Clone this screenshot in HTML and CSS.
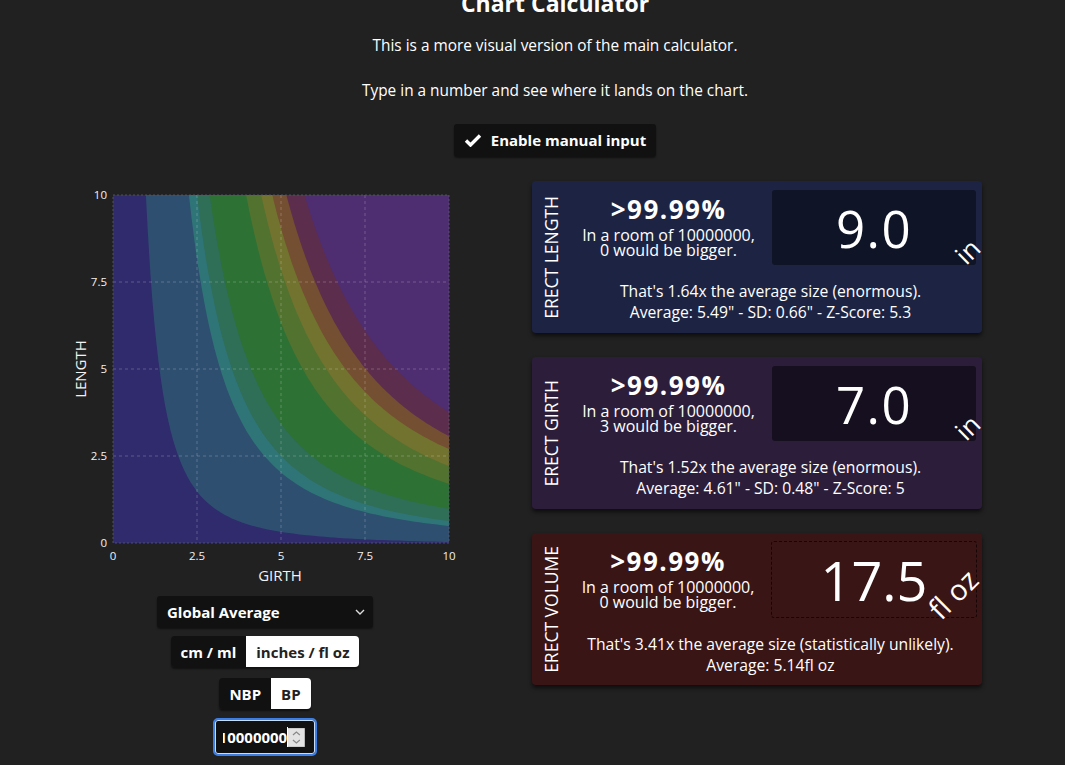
FILE: index.html
```html
<!DOCTYPE html>
<html lang="en">
<head>
    <meta charset="UTF-8">
    <meta name="viewport" content="width=device-width, initial-scale=1.0">
    <title>Chart Calculator</title>
    <link rel="stylesheet" href="styles.css">
</head>
<body>
    <div class="page">
        <header class="intro">
            <h1>Chart Calculator</h1>
            <p>This is a more visual version of the main calculator.</p>
            <p>Type in a number and see where it lands on the chart.</p>
            <button class="manual-btn">
                <svg class="check" width="18" height="14" viewBox="0 0 18 14"><path d="M2 7.5 L6.5 12 L16 2.5"/></svg>
                Enable manual input
            </button>
        </header>

        <div class="calc">
            <div class="chart-col">
                <svg id="chart" class="chart" width="390" height="400" viewBox="0 0 390 400">
                    <defs>
                        <clipPath id="plotClip"><rect x="43" y="8" width="336" height="348"/></clipPath>
                    </defs>
                    <g id="bands" clip-path="url(#plotClip)"></g>
                    <g class="grid">
                        <line x1="127" y1="8" x2="127" y2="356"/>
                        <line x1="211" y1="8" x2="211" y2="356"/>
                        <line x1="295" y1="8" x2="295" y2="356"/>
                        <line x1="43" y1="95" x2="379" y2="95"/>
                        <line x1="43" y1="182" x2="379" y2="182"/>
                        <line x1="43" y1="269" x2="379" y2="269"/>
                    </g>
                    <rect class="frame" x="43" y="8" width="336" height="348"/>
                    <g class="ticks">
                        <text x="37" y="12" text-anchor="end">10</text>
                        <text x="37" y="99" text-anchor="end">7.5</text>
                        <text x="37" y="186" text-anchor="end">5</text>
                        <text x="37" y="273" text-anchor="end">2.5</text>
                        <text x="37" y="360" text-anchor="end">0</text>
                        <text x="43" y="373" text-anchor="middle">0</text>
                        <text x="127" y="373" text-anchor="middle">2.5</text>
                        <text x="211" y="373" text-anchor="middle">5</text>
                        <text x="295" y="373" text-anchor="middle">7.5</text>
                        <text x="379" y="373" text-anchor="middle">10</text>
                    </g>
                    <text class="axis-title" x="210" y="394" text-anchor="middle">GIRTH</text>
                    <text class="axis-title" text-anchor="middle" transform="translate(16 182) rotate(-90)">LENGTH</text>
                </svg>

                <div class="region-select">
                    <span>Global Average</span>
                    <svg width="10" height="6" viewBox="0 0 10 6"><path d="M1 1 L5 5 L9 1"/></svg>
                </div>

                <div class="seg">
                    <span class="off">cm / ml</span>
                    <span class="on">inches / fl oz</span>
                </div>

                <div class="seg">
                    <span class="off">NBP</span>
                    <span class="on">BP</span>
                </div>

                <div class="num-input">
                    <div class="num-text"><span>10000000</span></div>
                    <svg class="spin" width="17" height="19" viewBox="0 0 17 19"><rect width="17" height="19" fill="#e2e2e2"/><path d="M5 7 L8.5 4 L12 7 M5 12 L8.5 15 L12 12"/></svg>
                </div>
            </div>

            <div class="cards">
                <div class="card card-length">
                    <div class="card-label">ERECT LENGTH</div>
                    <div class="card-body">
                        <div class="card-top">
                            <div class="stat">
                                <div class="stat-pct">&gt;99.99%</div>
                                <div class="stat-room">In a room of 10000000,<br>0 would be bigger.</div>
                            </div>
                            <div class="value-box">9.0<span class="unit">in</span></div>
                        </div>
                        <div class="card-bottom">
                            That's 1.64x the average size (enormous).<br>
                            Average: 5.49" - SD: 0.66" - Z-Score: 5.3
                        </div>
                    </div>
                </div>

                <div class="card card-girth">
                    <div class="card-label">ERECT GIRTH</div>
                    <div class="card-body">
                        <div class="card-top">
                            <div class="stat">
                                <div class="stat-pct">&gt;99.99%</div>
                                <div class="stat-room">In a room of 10000000,<br>3 would be bigger.</div>
                            </div>
                            <div class="value-box">7.0<span class="unit">in</span></div>
                        </div>
                        <div class="card-bottom">
                            That's 1.52x the average size (enormous).<br>
                            Average: 4.61" - SD: 0.48" - Z-Score: 5
                        </div>
                    </div>
                </div>

                <div class="card card-volume">
                    <div class="card-label">ERECT VOLUME</div>
                    <div class="card-body">
                        <div class="card-top">
                            <div class="stat">
                                <div class="stat-pct">&gt;99.99%</div>
                                <div class="stat-room">In a room of 10000000,<br>0 would be bigger.</div>
                            </div>
                            <div class="value-box">17.5<span class="unit">fl oz</span></div>
                        </div>
                        <div class="card-bottom">
                            That's 3.41x the average size (statistically unlikely).<br>
                            Average: 5.14fl oz
                        </div>
                    </div>
                </div>
            </div>
        </div>
    </div>

    <script>
        // plot area inside the svg, both axes run 0..10
        const plot = { x: 43, y: 8, w: 336, h: 348, max: 10 };
        const sx = g => plot.x + g / plot.max * plot.w;
        const sy = l => plot.y + plot.h - l / plot.max * plot.h;

        // each percentile curve: girth where it crosses length 10, length where it crosses girth 10
        const curves = [
            [0.98, 0.03], [2.26, 0.49], [2.5, 0.63], [2.88, 0.98], [3.96, 1.7],
            [4.41, 2.21], [4.74, 2.7], [5.16, 3.07], [5.7, 3.76]
        ];
        const colors = ['#2f2b6c', '#2e4f70', '#2f7577', '#2f6e57', '#2e7134',
                        '#52722f', '#72732f', '#754f31', '#5d2d4e', '#4e2e70'];

        const ns = 'http://www.w3.org/2000/svg';
        const bands = document.getElementById('bands');

        function addPath(d, fill) {
            const p = document.createElementNS(ns, 'path');
            p.setAttribute('d', d);
            p.setAttribute('fill', fill);
            bands.appendChild(p);
        }

        addPath(`M${sx(0)} ${sy(0)} H${sx(10)} V${sy(10)} H${sx(0)} Z`, colors[0]);

        curves.forEach(([gTop, lRight], i) => {
            // fit length = a / girth^2 + b through both edge points
            const a = (10 - lRight) / (1 / (gTop * gTop) - 0.01);
            const b = lRight - a / 100;
            let d = `M${sx(gTop)} ${sy(10.5)}`;
            const steps = 80;
            for (let s = 0; s <= steps; s++) {
                const g = gTop + (10.2 - gTop) * Math.pow(s / steps, 1.4);
                d += ` L${sx(g).toFixed(1)} ${sy(a / (g * g) + b).toFixed(1)}`;
            }
            d += ` L${sx(10.5)} ${sy(10.5)} Z`;
            addPath(d, colors[i + 1]);
        });
    </script>
</body>
</html>
```

FILE: styles.css
```css
body {
    margin: 0;
    background-color: #212121;
    color: #fff;
    font-family: "Open Sans", Lato, sans-serif;
    font-size: 15px;
    overflow: hidden;
}

.page {
    margin-left: 45px;
    width: 1020px;
}

.intro {
    text-align: center;
}

.intro h1 {
    margin: -11px 0 0;
    font-size: 23px;
    line-height: 28px;
}

.intro p {
    margin: 21px 0 0;
    line-height: 24px;
    font-size: 15.4px;
}

.intro p:first-of-type {
    margin-top: 17px;
}

.manual-btn {
    display: inline-flex;
    align-items: center;
    gap: 9px;
    height: 32px;
    margin-top: 21px;
    padding: 0 10px;
    background-color: #111;
    color: #fff;
    border: none;
    border-radius: 3px;
    font-family: inherit;
    font-size: 15px;
    font-weight: bold;
    box-shadow: 0 2px 2px rgba(0, 0, 0, 0.5);
}

.check path {
    fill: none;
    stroke: #fff;
    stroke-width: 3.4;
}

.calc {
    display: grid;
    grid-template-columns: 390px 450px;
    column-gap: 72px;
    align-items: start;
    margin: 25px 0 0 25px;
}

/* chart column */

.chart-col {
    display: flex;
    flex-direction: column;
    align-items: center;
}

.chart {
    display: block;
    margin-top: 6px;
}

.grid line {
    stroke: rgba(255, 255, 255, 0.22);
    stroke-dasharray: 3 3;
}

.frame {
    fill: none;
    stroke: rgba(90, 90, 110, 0.8);
    stroke-dasharray: 2 2;
}

.ticks text {
    fill: #f2f2f2;
    font-size: 11.5px;
    font-family: "Open Sans", sans-serif;
}

.axis-title {
    fill: #f2f2f2;
    font-size: 15px;
    font-family: "Open Sans", sans-serif;
}

.region-select {
    display: flex;
    justify-content: space-between;
    align-items: center;
    box-sizing: border-box;
    width: 216px;
    height: 31px;
    margin-top: 9px;
    padding: 0 8px 0 10px;
    background-color: #111;
    border-radius: 3px;
    font-weight: bold;
    box-shadow: 0 2px 2px rgba(0, 0, 0, 0.5);
}

.region-select path {
    fill: none;
    stroke: #ddd;
    stroke-width: 1.4;
}

.seg {
    display: flex;
    height: 31px;
    margin-top: 9px;
    border-radius: 4px;
    overflow: hidden;
    font-weight: bold;
    box-shadow: 0 2px 2px rgba(0, 0, 0, 0.5);
}

.seg span {
    display: flex;
    align-items: center;
    padding: 0 10px;
}

.seg .off {
    background-color: #111;
    color: #fff;
}

.seg .on {
    background-color: #fff;
    color: #222;
}

.seg + .seg {
    margin-top: 11px;
}

.num-input {
    display: flex;
    align-items: center;
    box-sizing: border-box;
    width: 104px;
    height: 38px;
    margin-top: 9px;
    padding: 0 10px 0 8px;
    background-color: #111;
    border: 2px solid #3b7fe6;
    border-radius: 5px;
    box-shadow: inset 0 0 0 1px #c9dcf7;
    font-weight: bold;
}

.num-text {
    display: flex;
    justify-content: flex-end;
    width: 65px;
    overflow: hidden;
    border-right: 1px solid #fff;
    white-space: nowrap;
}

.spin path {
    fill: none;
    stroke: #888;
    stroke-width: 1.2;
}

/* result cards */

.cards {
    display: flex;
    flex-direction: column;
    gap: 24px;
}

.card {
    display: flex;
    box-sizing: border-box;
    height: 152px;
    padding: 9px 6px 0 6px;
    border-radius: 4px;
    box-shadow: 0 3px 4px rgba(0, 0, 0, 0.6);
}

.card-length { background-color: #1d2443; }
.card-girth { background-color: #2c1e3b; }
.card-volume { background-color: #3a1516; }

.card-length .value-box { background-color: #0f1426; }
.card-girth .value-box { background-color: #160f1f; }
.card-volume .value-box {
    margin: -1px -1px 0 0;
    border: 1px dashed #170606;
    font-size: 54px;
    letter-spacing: 0;
}

.card-label {
    writing-mode: vertical-rl;
    transform: rotate(180deg);
    align-self: center;
    width: 27px;
    text-align: center;
    font-size: 17.5px;
    line-height: 27px;
    margin-top: -9px;
}

.card-body {
    flex: 1;
    display: flex;
    flex-direction: column;
}

.card-top {
    display: flex;
    align-items: flex-start;
}

.stat {
    flex: 1;
    text-align: center;
    padding-top: 4px;
}

.stat-pct {
    font-size: 26px;
    font-weight: bold;
    letter-spacing: 1.5px;
    line-height: 30px;
}

.stat-room {
    font-size: 16px;
    line-height: 15px;
    margin-top: 4px;
}

.value-box {
    position: relative;
    display: flex;
    align-items: center;
    justify-content: center;
    width: 204px;
    height: 75px;
    border-radius: 3px;
    font-size: 51px;
    letter-spacing: 1.5px;
}

.unit {
    position: absolute;
    right: -3px;
    bottom: 1px;
    font-size: 26px;
    line-height: 26px;
    letter-spacing: 0;
    transform: rotate(-45deg);
}

.card-volume .unit {
    right: -5px;
    bottom: 10px;
    font-size: 29px;
}

.card-bottom {
    margin-top: 16px;
    text-align: center;
    font-size: 15.7px;
    line-height: 21px;
}
```
